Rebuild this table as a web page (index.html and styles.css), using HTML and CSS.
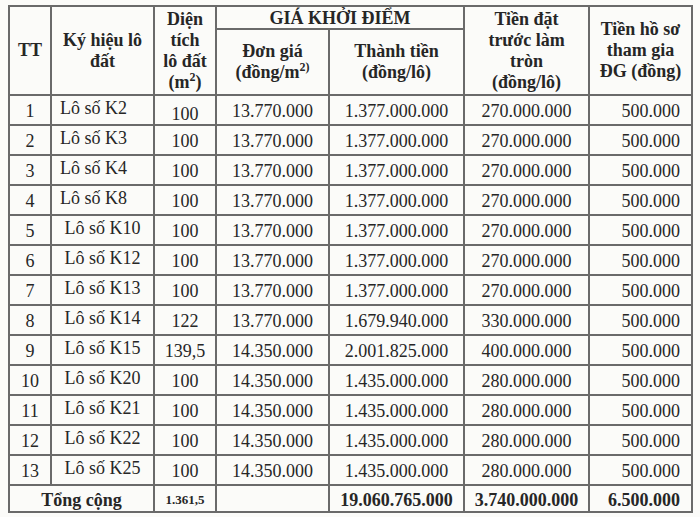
FILE: index.html
```html
<!DOCTYPE html>
<html lang="vi">
<head>
<meta charset="utf-8">
<title>Giá khởi điểm</title>
<link rel="stylesheet" href="styles.css">
</head>
<body>
<div class="page">
<table class="grid">
  <colgroup>
    <col class="c-tt"><col class="c-name"><col class="c-area"><col class="c-unit"><col class="c-total"><col class="c-deposit"><col class="c-fee">
  </colgroup>
  <thead>
    <tr class="h1">
      <th rowspan="2">TT</th>
      <th rowspan="2">Ký hiệu lô<br>đất</th>
      <th rowspan="2" class="top">Diện<br>tích<br>lô đất<br>(m<sup>2</sup>)</th>
      <th colspan="2" class="span">GIÁ KHỞI ĐIỂM</th>
      <th rowspan="2" class="top">Tiền đặt<br>trước làm<br>tròn<br>(đồng/lô)</th>
      <th rowspan="2">Tiền hồ sơ<br>tham gia<br>ĐG (đồng)</th>
    </tr>
    <tr class="h2">
      <th>Đơn giá<br>(đồng/m<sup>2)</sup></th>
      <th>Thành tiền<br>(đồng/lô)</th>
    </tr>
  </thead>
  <tbody>
    <tr><td>1</td><td class="name left">Lô số K2</td><td class="low">100</td><td>13.770.000</td><td>1.377.000.000</td><td>270.000.000</td><td class="fee">500.000</td></tr>
    <tr><td>2</td><td class="name left">Lô số K3</td><td>100</td><td>13.770.000</td><td>1.377.000.000</td><td>270.000.000</td><td class="fee">500.000</td></tr>
    <tr><td>3</td><td class="name left">Lô số K4</td><td>100</td><td>13.770.000</td><td>1.377.000.000</td><td>270.000.000</td><td class="fee">500.000</td></tr>
    <tr><td>4</td><td class="name left">Lô số K8</td><td>100</td><td>13.770.000</td><td>1.377.000.000</td><td>270.000.000</td><td class="fee">500.000</td></tr>
    <tr><td>5</td><td class="name">Lô số K10</td><td>100</td><td>13.770.000</td><td>1.377.000.000</td><td>270.000.000</td><td class="fee">500.000</td></tr>
    <tr><td>6</td><td class="name">Lô số K12</td><td>100</td><td>13.770.000</td><td>1.377.000.000</td><td>270.000.000</td><td class="fee">500.000</td></tr>
    <tr><td>7</td><td class="name">Lô số K13</td><td>100</td><td>13.770.000</td><td>1.377.000.000</td><td>270.000.000</td><td class="fee">500.000</td></tr>
    <tr><td>8</td><td class="name">Lô số K14</td><td>122</td><td>13.770.000</td><td>1.679.940.000</td><td>330.000.000</td><td class="fee">500.000</td></tr>
    <tr><td>9</td><td class="name">Lô số K15</td><td>139,5</td><td>14.350.000</td><td>2.001.825.000</td><td>400.000.000</td><td class="fee">500.000</td></tr>
    <tr><td>10</td><td class="name">Lô số K20</td><td>100</td><td>14.350.000</td><td>1.435.000.000</td><td>280.000.000</td><td class="fee">500.000</td></tr>
    <tr><td>11</td><td class="name">Lô số K21</td><td>100</td><td>14.350.000</td><td>1.435.000.000</td><td>280.000.000</td><td class="fee">500.000</td></tr>
    <tr><td>12</td><td class="name">Lô số K22</td><td>100</td><td>14.350.000</td><td>1.435.000.000</td><td>280.000.000</td><td class="fee">500.000</td></tr>
    <tr><td>13</td><td class="name">Lô số K25</td><td>100</td><td>14.350.000</td><td>1.435.000.000</td><td>280.000.000</td><td class="fee">500.000</td></tr>
  </tbody>
  <tfoot>
    <tr class="sum">
      <td colspan="2" class="label">Tổng cộng</td>
      <td class="small">1.361,5</td>
      <td></td>
      <td>19.060.765.000</td>
      <td>3.740.000.000</td>
      <td class="fee">6.500.000</td>
    </tr>
  </tfoot>
</table>
</div>
</body>
</html>
```

FILE: styles.css
```css
html, body {
  margin: 0;
  padding: 0;
  background: #fbfbf9;
}

.page {
  padding: 5px 9px 0 8px;
}

.grid {
  width: 683px;
  border-collapse: collapse;
  table-layout: fixed;
  font-family: "Liberation Serif", "Times New Roman", serif;
  font-size: 18px;
  color: #262626;
}

.c-tt { width: 42px; }
.c-name { width: 103px; }
.c-area { width: 62px; }
.c-unit { width: 113px; }
.c-total { width: 135px; }
.c-deposit { width: 125px; }
.c-fee { width: 103px; }

.grid th,
.grid td {
  border: 2px solid #6a6a6a;
  padding: 0;
  text-align: center;
  vertical-align: middle;
  white-space: nowrap;
}

.grid th {
  font-weight: bold;
  line-height: 21px;
}

.grid th sup {
  font-size: 12px;
  line-height: 0;
}

.h1 { height: 23px; }
.h2 { height: 66px; }

.grid th.span {
  line-height: 20px;
  padding-top: 1px;
}

.grid th.top {
  vertical-align: middle;
}

.grid tbody tr { height: 30px; }

.grid td {
  line-height: 20px;
  padding-top: 2px;
}

.grid td.name {
  padding-bottom: 5px;
  padding-top: 0;
}

.grid td.left {
  text-align: left;
  padding-left: 8px;
}

.grid td.low {
  padding-top: 8px;
}

.grid td.fee {
  text-align: right;
  padding-right: 11px;
}

.sum { height: 27px; }

.sum td {
  font-weight: bold;
}

.sum td.label {
  font-size: 18px;
}

.sum td.small {
  font-size: 13px;
}
```
